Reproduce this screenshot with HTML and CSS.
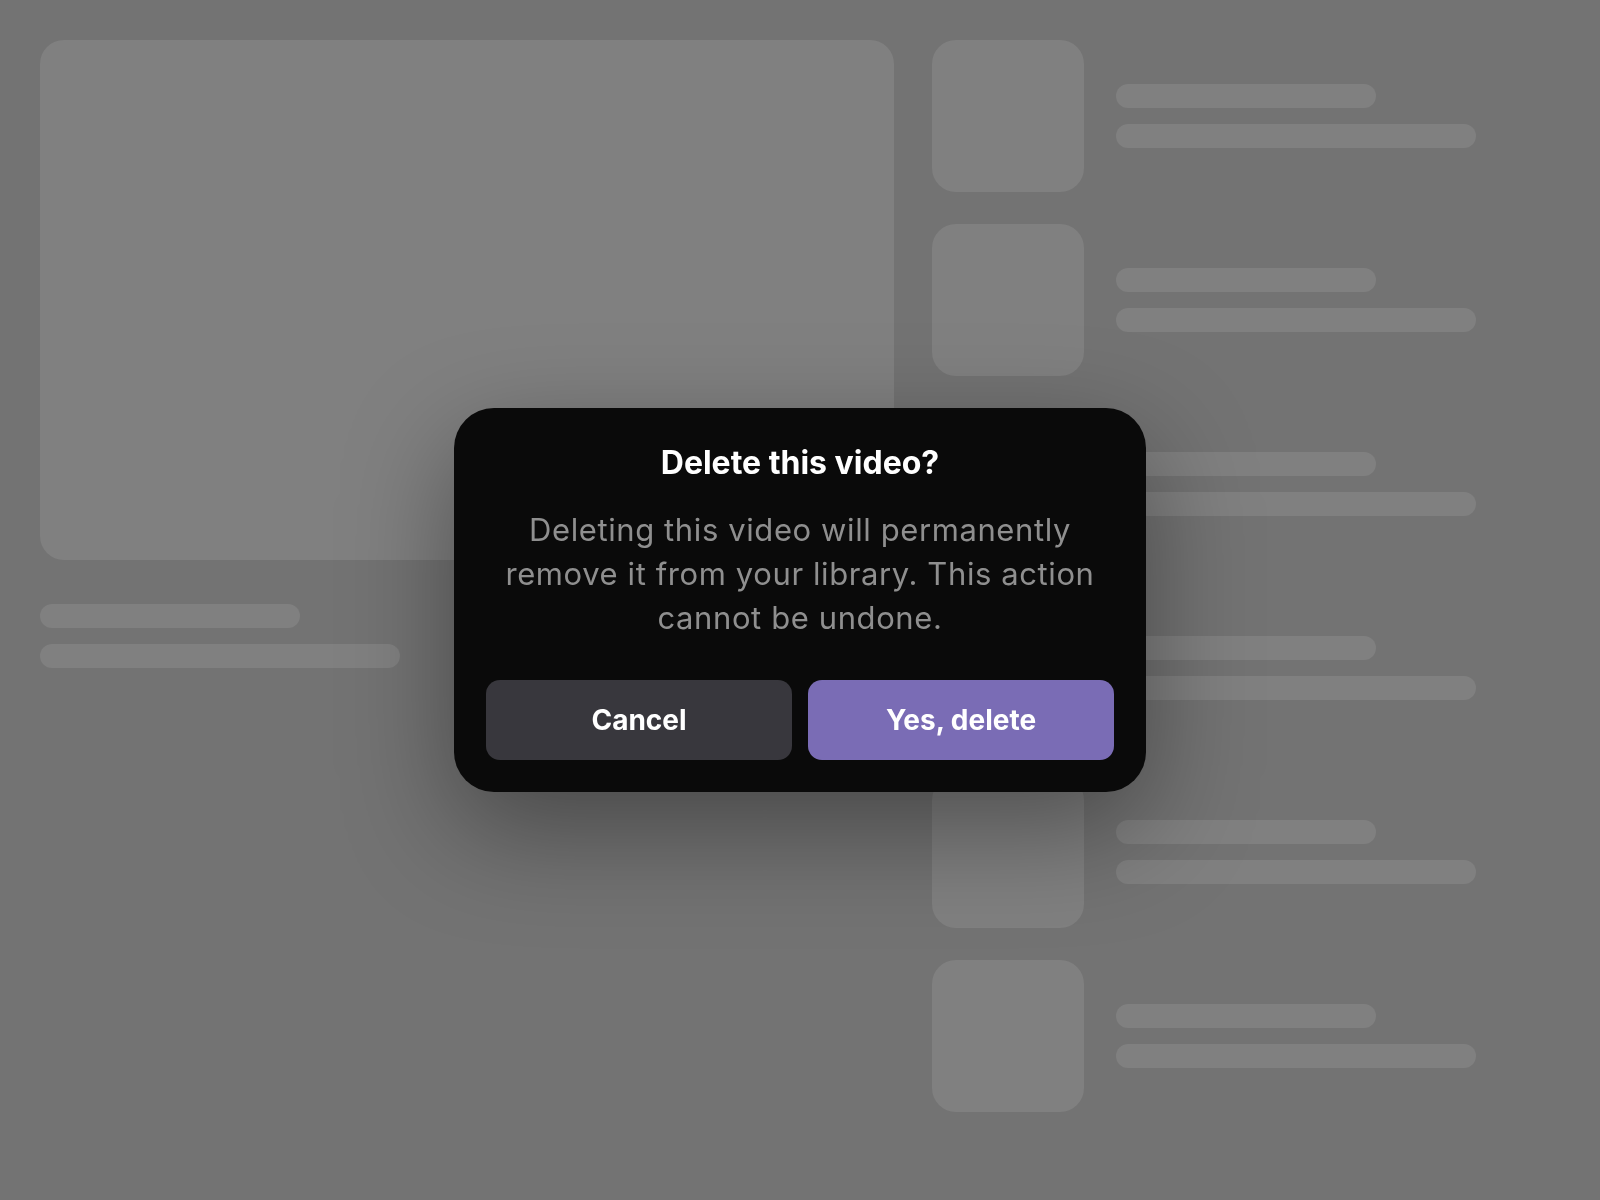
FILE: index.html
```html
<!DOCTYPE html>
<html lang="en">
<head>
<meta charset="utf-8">
<title>Delete this video?</title>
<link rel="stylesheet" href="styles.css">
</head>
<body>
<div class="page">
  <div class="main">
    <div class="player"></div>
    <div class="lines lines-main">
      <div class="bar bar-short"></div>
      <div class="bar bar-long"></div>
    </div>
  </div>
  <div class="side">
    <div class="row"><div class="thumb"></div><div class="lines"><div class="bar bar-short"></div><div class="bar bar-long"></div></div></div>
    <div class="row"><div class="thumb"></div><div class="lines"><div class="bar bar-short"></div><div class="bar bar-long"></div></div></div>
    <div class="row"><div class="thumb"></div><div class="lines"><div class="bar bar-short"></div><div class="bar bar-long"></div></div></div>
    <div class="row"><div class="thumb"></div><div class="lines"><div class="bar bar-short"></div><div class="bar bar-long"></div></div></div>
    <div class="row"><div class="thumb"></div><div class="lines"><div class="bar bar-short"></div><div class="bar bar-long"></div></div></div>
    <div class="row"><div class="thumb"></div><div class="lines"><div class="bar bar-short"></div><div class="bar bar-long"></div></div></div>
  </div>
</div>
<div class="overlay">
  <div class="dialog" role="dialog" aria-modal="true">
    <h2 class="dialog-title">Delete this video?</h2>
    <p class="dialog-text">Deleting this video will permanently remove it from your library. This action cannot be undone.</p>
    <div class="actions">
      <button class="btn btn-cancel">Cancel</button>
      <button class="btn btn-delete">Yes, delete</button>
    </div>
  </div>
</div>
</body>
</html>
```
FILE: styles.css
```css
* { box-sizing: border-box; }
html, body {
  margin: 0;
  padding: 0;
  background: #737373;
  font-family: "Inter", "Liberation Sans", sans-serif;
}
.page {
  display: flex;
  gap: 38px;
  padding: 40px;
  height: 1200px;
  overflow: hidden;
}
.main {
  width: 854px;
  flex: none;
}
.player {
  width: 854px;
  height: 520px;
  border-radius: 24px;
  background: #808080;
}
.lines {
  display: flex;
  flex-direction: column;
  gap: 16px;
}
.lines-main {
  margin-top: 44px;
}
.bar {
  height: 24px;
  border-radius: 12px;
  background: #808080;
}
.bar-short { width: 260px; }
.bar-long { width: 360px; }
.side {
  display: flex;
  flex-direction: column;
  gap: 32px;
}
.row {
  display: flex;
  align-items: center;
  gap: 32px;
}
.thumb {
  width: 152px;
  height: 152px;
  border-radius: 24px;
  background: #808080;
  flex: none;
}
.overlay {
  position: fixed;
  inset: 0;
  display: flex;
  align-items: center;
  justify-content: center;
}
.dialog {
  width: 692px;
  padding: 32px;
  border-radius: 40px;
  background: #0a0a0a;
  box-shadow: 0 36px 110px rgba(0, 0, 0, 0.38);
  text-align: center;
}
.dialog-title {
  margin: 0;
  padding-top: 1px;
  font-size: 32px;
  line-height: 44px;
  font-weight: 700;
  color: #ffffff;
}
.dialog-text {
  margin: 23px 0 0;
  font-size: 31px;
  line-height: 44px;
  letter-spacing: 0.6px;
  font-weight: 400;
  color: #8f8f8f;
}
.actions {
  display: flex;
  gap: 16px;
  margin-top: 40px;
}
.btn {
  flex: 1;
  height: 80px;
  border: none;
  border-radius: 14px;
  font-family: inherit;
  font-size: 28px;
  font-weight: 700;
  color: #ffffff;
  cursor: pointer;
}
.btn-cancel { background: #38373d; }
.btn-delete { background: #7a6cb5; }
```
